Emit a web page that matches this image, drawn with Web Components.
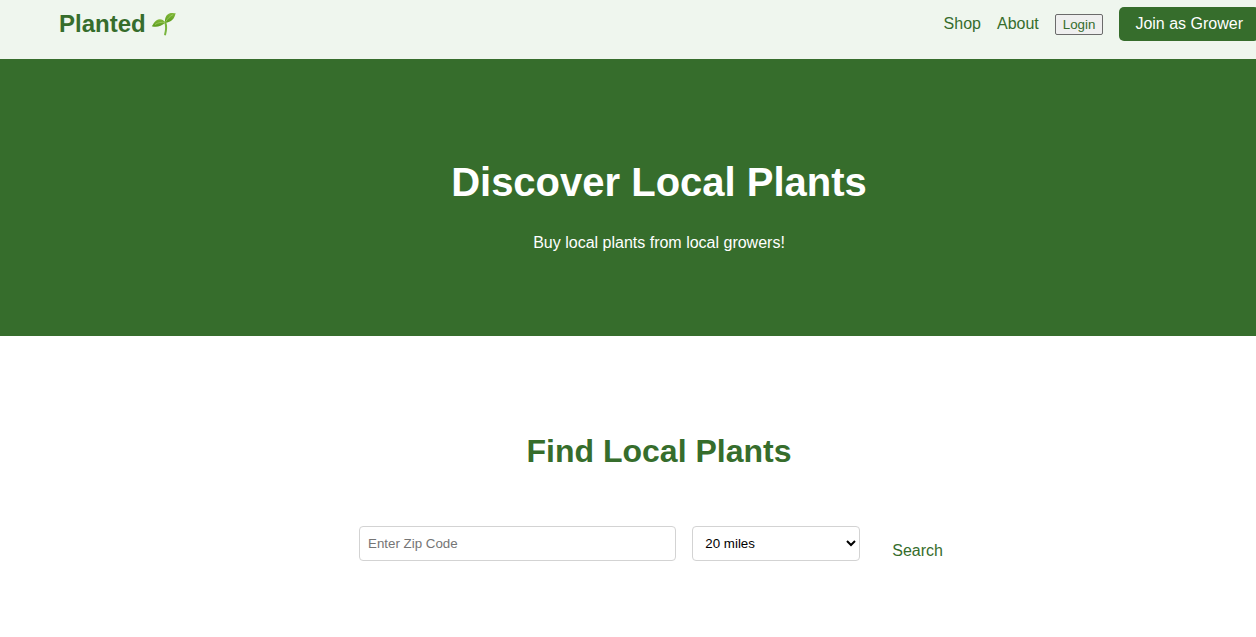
<!DOCTYPE html>
<html lang="en">
<head>
<meta charset="utf-8">
<title>Planted</title>
<style>
  html { overflow: hidden; }
  body {
    --green: #366d2c;
    --mint: #eff6ee;
    margin: 0;
    width: calc(100% + 62px);
    background: #fff;
    font: 16px/24px "Liberation Sans", Arial, sans-serif;
  }
</style>
</head>
<body>
<planted-page></planted-page>

<template id="header-template">
  <style>
    :host { display: block; background: var(--mint); color: var(--green); }
    .bar { display: flex; justify-content: space-between; align-items: center; max-width: 1200px; margin: 0 auto; padding: 7px 0 18px; }
    nav { display: flex; align-items: center; gap: 16px; }
    a { color: inherit; text-decoration: none; }
    .logo { display: flex; align-items: center; gap: 5px; font-size: 24px; font-weight: bold; }
    .logo svg { width: 26px; height: 26px; }
    button { box-sizing: border-box; height: 21px; margin: 0; padding: 0 7px; border: 1px solid #6b6b6b; border-radius: 2px; background: #efefef; color: inherit; font-family: inherit; }
    .join { padding: 5px 16px; border-radius: 5px; background: var(--green); color: #fff; }
  </style>
  <div class="bar">
    <a class="logo" href="#">Planted
      <svg viewBox="0 0 26 26" aria-hidden="true">
        <defs>
          <linearGradient id="leaf" x1="0" y1="0" x2="0" y2="1"><stop offset="0" stop-color="#82b83a"/><stop offset="1" stop-color="#5a9c1d"/></linearGradient>
        </defs>
        <path d="M14.2 11.2C15.6 15 15.3 19 14.1 23.4" fill="none" stroke="#78b43c" stroke-width="2" stroke-linecap="round"/>
        <path d="M14.3 11.8C12.2 8.2 8.5 7.4 5.2 9.5 3.2 10.8 2.4 13.3 .8 15.2 5.8 16.6 10 15.3 14.3 11.8Z" fill="url(#leaf)"/>
        <path d="M14.1 11.7C13.5 6.8 15.5 3.1 19 2.2 21 1.6 23 2.6 24.6 1.9 23.7 7.6 20.5 11.2 14.1 11.7Z" fill="url(#leaf)"/>
        <path d="M14.3 11.5C10.5 10.9 7 11.5 4 13.5M14.5 11C16.6 7.4 19.3 4.8 22 3.7" fill="none" stroke="#a6d36c" stroke-width=".7"/>
      </svg>
    </a>
    <nav>
      <a href="#shop">Shop</a>
      <a href="#about">About</a>
      <button type="button">Login</button>
      <a class="join" href="#join">Join as Grower</a>
    </nav>
  </div>
</template>

<template id="hero-template">
  <style>
    :host { display: block; padding: 99px 16px 81px; background: var(--green); color: #fff; text-align: center; }
    ::slotted(h1) { margin: 0 0 25px; font-size: 40px; line-height: 48px; }
    ::slotted(p) { margin: 0; }
  </style>
  <slot></slot>
</template>

<template id="search-template">
  <style>
    :host { display: block; padding: 96px 16px; color: var(--green); text-align: center; }
    h2 { margin: 0 0 56px; font-size: 32px; line-height: 38px; }
    form { display: flex; align-items: flex-start; gap: 16px; max-width: 600px; margin: 0 auto; }
    input, select { box-sizing: border-box; height: 35px; margin: 0; border: 1px solid #d3d3d3; border-radius: 4px; background: #fff; color: #000; font-family: inherit; }
    input { flex: 1; min-width: 0; padding: 8px; }
    input::placeholder { color: #757575; }
    select { width: 168px; padding: 0 0 0 8px; }
    button { margin: 8px 0 0; padding: 5px 16px; border: 0; background: none; color: inherit; font: inherit; }
  </style>
  <h2>Find Local Plants</h2>
  <form>
    <input type="text" placeholder="Enter Zip Code" aria-label="Zip code">
    <select aria-label="Distance">
      <option>5 miles</option>
      <option>10 miles</option>
      <option selected>20 miles</option>
      <option>50 miles</option>
    </select>
    <button type="button">Search</button>
  </form>
</template>

<template id="page-template">
  <style>:host { display: block; }</style>
  <planted-header></planted-header>
  <main>
    <planted-hero>
      <h1>Discover Local Plants</h1>
      <p>Buy local plants from local growers!</p>
    </planted-hero>
    <plant-search></plant-search>
  </main>
</template>

<script>
  class TemplateElement extends HTMLElement {
    constructor() {
      super();
      const template = document.getElementById(this.constructor.template);
      this.attachShadow({ mode: 'open' }).append(template.content.cloneNode(true));
    }
  }
  customElements.define('planted-header', class PlantedHeader extends TemplateElement { static template = 'header-template'; });
  customElements.define('planted-hero', class PlantedHero extends TemplateElement { static template = 'hero-template'; });
  customElements.define('plant-search', class PlantSearch extends TemplateElement { static template = 'search-template'; });
  customElements.define('planted-page', class PlantedPage extends TemplateElement { static template = 'page-template'; });
</script>
</body>
</html>
